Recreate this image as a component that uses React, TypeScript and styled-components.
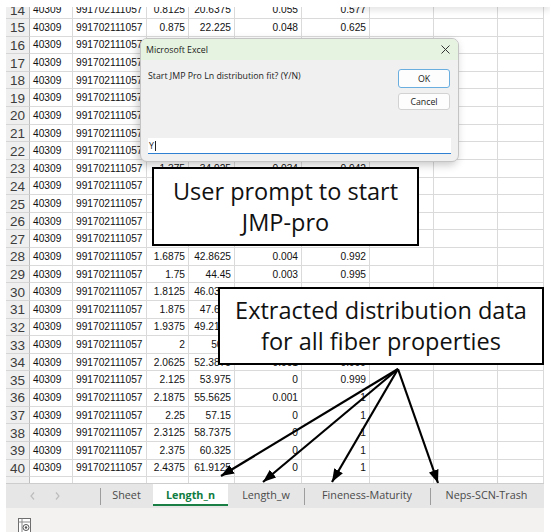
import React from 'react';
import styled, { createGlobalStyle } from 'styled-components';

const GlobalStyle = createGlobalStyle`
  html, body {
    margin: 0;
    padding: 0;
    background: #fff;
  }
  * {
    box-sizing: border-box;
  }
`;

const COLS = '24px 43px 74px 42px 46px 67px 68px 64px 64px 46px';
const ROW_H = 17.64;

// E / F columns (density, cumulative) per row, starting at row 14
const dens = [
  '0.055', '0.048', '0.046', '0.044', '0.042', '0.04', '0.038', '0.037', '0.036', '0.034',
  '0.018', '0.013', '0.009', '0.006', '0.004', '0.003', '0.002', '0.001', '0.001', '0.001',
  '0.001', '0', '0.001', '0', '0', '0', '0',
];
const cum = [
  '0.577', '0.625', '0.671', '0.715', '0.757', '0.797', '0.835', '0.872', '0.908', '0.942',
  '0.96', '0.973', '0.982', '0.988', '0.992', '0.995', '0.997', '0.998', '0.998', '0.999',
  '0.999', '0.999', '1', '1', '1', '1', '1',
];

const rows = dens.map((e, i) => {
  const inch = 0.8125 + i * 0.0625;
  return {
    n: 14 + i,
    inch: String(inch),
    mm: String(parseFloat((inch * 25.4).toFixed(4))),
    e,
    f: cum[i],
  };
});

const Screen = styled.div`
  position: relative;
  width: 550px;
  height: 532px;
  overflow: hidden;
  background: #fff;
`;

const Frame = styled.div`
  margin-left: 6px;
  width: 538px;
  display: flex;
  flex-direction: column;
`;

const SheetGrid = styled.div`
  height: 482.7px;
  overflow: hidden;
  padding-top: 1.36px;
  background: #fff;
`;

const Row = styled.div`
  display: grid;
  grid-template-columns: ${COLS};
  height: ${ROW_H}px;
`;

const RowHead = styled.div`
  display: flex;
  align-items: center;
  justify-content: center;
  background: #efefef;
  border-right: 1px solid #bdbdbd;
  border-bottom: 1px solid #d6d6d6;
  font-family: 'Liberation Sans', Arial, sans-serif;
  font-size: 13.5px;
  color: #3c3c3c;
  padding-top: 1px;
`;

const Cell = styled.div<{ $right?: boolean }>`
  display: flex;
  align-items: center;
  justify-content: ${(p) => (p.$right ? 'flex-end' : 'flex-start')};
  padding: 0 3px;
  border-right: 1px solid #dadada;
  border-bottom: 1px solid #dadada;
  font-family: 'Liberation Sans', Arial, sans-serif;
  font-size: 10.2px;
  color: #111;
  white-space: nowrap;
  overflow: hidden;
`;

const TabBar = styled.div`
  height: 25.3px;
  display: flex;
  align-items: flex-start;
  background: #e6e6e6;
  border-top: 1px solid #cdcdcd;
`;

const TabNav = styled.div`
  width: 94px;
  height: 100%;
  display: flex;
  align-items: center;
  gap: 20px;
  padding-left: 24px;
`;

const Tab = styled.div<{ $w: number; $active?: boolean; $sep?: boolean }>`
  position: relative;
  width: ${(p) => p.$w}px;
  height: 22.3px;
  display: flex;
  align-items: center;
  justify-content: center;
  font-family: 'Open Sans', 'Noto Sans', sans-serif;
  font-size: 10.8px;
  font-weight: ${(p) => (p.$active ? 700 : 400)};
  color: ${(p) => (p.$active ? '#107c41' : '#4a4a4a')};
  background: ${(p) => (p.$active ? '#fff' : 'transparent')};
  border-bottom: 2.5px solid ${(p) => (p.$active ? '#1a7f45' : 'transparent')};
  padding-top: 1px;

  &::before {
    content: '';
    display: ${(p) => (p.$sep ? 'block' : 'none')};
    position: absolute;
    left: 0;
    top: 4px;
    height: 17px;
    width: 1px;
    background: #9d9d9d;
  }
`;

const StatusBar = styled.div`
  height: 24px;
  background: #f3f2f1;
  padding: 10px 0 0 12px;
`;

const TopBand = styled.div`
  position: absolute;
  left: 0;
  right: 0;
  top: 0;
  height: 7px;
  background: #fff;

  &::after {
    content: '';
    position: absolute;
    left: 350px;
    right: 0;
    bottom: 0;
    height: 7px;
    box-shadow: 0 3px 6px rgba(0, 0, 0, 0.12);
  }
`;

const Dialog = styled.div`
  position: absolute;
  left: 140px;
  top: 38px;
  width: 319px;
  background: #f0f0f0;
  border: 1px solid #c4c4c4;
  border-radius: 7px;
  overflow: hidden;
  box-shadow: -2px 3px 8px rgba(0, 0, 0, 0.22);
  font-family: 'Open Sans', 'Noto Sans', sans-serif;
  font-size: 8.8px;
  color: #1b1b1b;
`;

const DialogTitle = styled.div`
  height: 21px;
  display: flex;
  align-items: center;
  justify-content: space-between;
  padding: 0 8px 0 5px;
  background: #e6f3e0;
`;

const DialogBody = styled.div`
  display: grid;
  grid-template-columns: 1fr 52px;
  column-gap: 8px;
  padding: 9px 8px 0 7px;
`;

const Message = styled.div`
  padding-top: 1px;
`;

const ButtonCol = styled.div`
  display: flex;
  flex-direction: column;
  gap: 5px;
`;

const Button = styled.div<{ $primary?: boolean }>`
  height: ${(p) => (p.$primary ? 19 : 17)}px;
  display: flex;
  align-items: center;
  justify-content: center;
  background: #fdfdfd;
  border: 1px solid ${(p) => (p.$primary ? '#6aaee0' : '#d2d2d2')};
  border-radius: 3px;
`;

const InputBox = styled.div`
  margin: 28px 7px 7px 7px;
  height: 16px;
  display: flex;
  align-items: center;
  padding-left: 1px;
  background: #fff;
  border-bottom: 1px solid #2f7fd3;
`;

const Caret = styled.span`
  display: inline-block;
  width: 1px;
  height: 10px;
  margin-left: 1px;
  background: #222;
`;

const Callout = styled.div<{ $x: number; $y: number; $w: number; $h: number }>`
  position: absolute;
  left: ${(p) => p.$x}px;
  top: ${(p) => p.$y}px;
  width: ${(p) => p.$w}px;
  height: ${(p) => p.$h}px;
  display: flex;
  flex-direction: column;
  align-items: center;
  justify-content: center;
  background: #fff;
  border: 2px solid #000;
  font-family: 'Open Sans', 'Noto Sans', sans-serif;
  font-size: 23.5px;
  line-height: 31px;
  color: #111;
  text-align: center;
  white-space: nowrap;
`;

const ArrowLayer = styled.svg`
  position: absolute;
  left: 0;
  top: 0;
  pointer-events: none;
`;

const Chevron = ({ dir }: { dir: 'l' | 'r' }) => (
  <svg width="5" height="8" viewBox="0 0 5 8">
    <path
      d={dir === 'l' ? 'M4 0.5 L1 4 L4 7.5' : 'M1 0.5 L4 4 L1 7.5'}
      fill="none"
      stroke="#bdbdbd"
      strokeWidth="1.2"
    />
  </svg>
);

const MacroIcon = () => (
  <svg width="14" height="16" viewBox="0 0 14 16">
    <rect x="0.5" y="0.5" width="12" height="15" fill="#fff" stroke="#6d6d6d" />
    <line x1="0.5" y1="4" x2="12.5" y2="4" stroke="#8a8a8a" />
    <line x1="4" y1="0.5" x2="4" y2="15" stroke="#8a8a8a" />
    <circle cx="8" cy="9.5" r="3" fill="none" stroke="#555" />
    <circle cx="8" cy="9.5" r="1.2" fill="#555" />
  </svg>
);

const arrowFrom = { x: 398, y: 369 };
const arrowTips = [
  { x: 221, y: 476 },
  { x: 263, y: 482 },
  { x: 332, y: 482 },
  { x: 438, y: 483 },
];

export default function App() {
  return (
    <Screen>
      <GlobalStyle />
      <Frame>
        <SheetGrid>
          {rows.map((r) => (
            <Row key={r.n}>
              <RowHead>{r.n}</RowHead>
              <Cell>40309</Cell>
              <Cell>991702111057</Cell>
              <Cell $right>{r.inch}</Cell>
              <Cell $right>{r.mm}</Cell>
              <Cell $right>{r.e}</Cell>
              <Cell $right>{r.f}</Cell>
              <Cell />
              <Cell />
              <Cell />
            </Row>
          ))}
          {/* row 41: only a sliver shows above the tab bar */}
          <Row>
            <RowHead />
            <Cell />
            <Cell />
            <Cell />
            <Cell />
            <Cell />
            <Cell />
            <Cell />
            <Cell />
            <Cell />
          </Row>
        </SheetGrid>
        <TabBar>
          <TabNav>
            <Chevron dir="l" />
            <Chevron dir="r" />
          </TabNav>
          <Tab $w={53} $sep>Sheet</Tab>
          <Tab $w={75} $active>Length_n</Tab>
          <Tab $w={76}>Length_w</Tab>
          <Tab $w={126} $sep>Fineness-Maturity</Tab>
          <Tab $w={113} $sep>Neps-SCN-Trash</Tab>
        </TabBar>
        <StatusBar>
          <MacroIcon />
        </StatusBar>
      </Frame>

      <TopBand />

      <Dialog>
        <DialogTitle>
          <span>Microsoft Excel</span>
          <svg width="9" height="9" viewBox="0 0 9 9">
            <path d="M0.5 0.5 L8.5 8.5 M8.5 0.5 L0.5 8.5" stroke="#333" strokeWidth="1" />
          </svg>
        </DialogTitle>
        <DialogBody>
          <Message>Start JMP Pro Ln distribution fit? (Y/N)</Message>
          <ButtonCol>
            <Button $primary>OK</Button>
            <Button>Cancel</Button>
          </ButtonCol>
        </DialogBody>
        <InputBox>
          Y<Caret />
        </InputBox>
      </Dialog>

      <Callout $x={152} $y={167} $w={267} $h={79}>
        <span>User prompt to start</span>
        <span>JMP-pro</span>
      </Callout>

      <Callout $x={218} $y={287} $w={326} $h={78}>
        <span>Extracted distribution data</span>
        <span>for all fiber properties</span>
      </Callout>

      <ArrowLayer width="550" height="532" viewBox="0 0 550 532">
        <defs>
          <marker
            id="head"
            markerUnits="userSpaceOnUse"
            markerWidth="14"
            markerHeight="11"
            refX="13"
            refY="5"
            orient="auto"
          >
            <path d="M0 0 L13 5 L0 10 Z" fill="#000" />
          </marker>
        </defs>
        {arrowTips.map((t, i) => (
          <line
            key={i}
            x1={arrowFrom.x}
            y1={arrowFrom.y}
            x2={t.x}
            y2={t.y}
            stroke="#000"
            strokeWidth="2.2"
            markerEnd="url(#head)"
          />
        ))}
      </ArrowLayer>
    </Screen>
  );
}
